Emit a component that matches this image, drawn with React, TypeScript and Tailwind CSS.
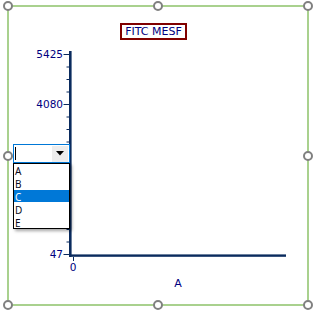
import React from "react";

const navy = "#000080";
const axis = "#0a2b5e";

/* selection handles around the chart frame (center x, center y) */
const handles: [number, number][] = [
  [8, 6],
  [158, 6],
  [308, 6],
  [8, 156],
  [308, 156],
  [8, 305],
  [158, 305],
  [308, 305],
];

const majorTicks = [
  { y: 54.5, label: "5425" },
  { y: 104.5, label: "4080" },
  { y: 154.5, label: "2736" },
  { y: 204.5, label: "1391" },
  { y: 254.5, label: "47" },
];

const minorTicks = Array.from({ length: 17 }, (_, i) => 54.5 + i * 12.5).filter(
  (y) => !majorTicks.some((t) => t.y === y)
);

const items = ["A", "B", "C", "D", "E"];

const Chart = () => (
  <svg
    width={298}
    height={264}
    viewBox="9 40 298 264"
    className="block"
    style={{ fontFamily: '"DejaVu Sans", Verdana, sans-serif' }}
  >
    {/* y axis */}
    <rect x={69} y={51} width={2.6} height={206} fill={axis} />
    {/* x axis */}
    <rect x={69} y={254.4} width={217} height={2.4} fill={axis} />

    {minorTicks.map((y) => (
      <line key={y} x1={66.5} x2={69} y1={y} y2={y} stroke={axis} strokeWidth={1} />
    ))}
    {majorTicks.map((t) => (
      <g key={t.y}>
        <line x1={63.5} x2={69} y1={t.y} y2={t.y} stroke={axis} strokeWidth={1} />
        <text x={63} y={t.y + 3.6} textAnchor="end" fontSize={10.5} fill={navy}>
          {t.label}
        </text>
      </g>
    ))}

    {/* x tick */}
    <line x1={73.5} x2={73.5} y1={257} y2={261} stroke={axis} strokeWidth={1} />
    <text x={73} y={271} textAnchor="middle" fontSize={10.5} fill={navy}>
      0
    </text>
    <text x={178} y={287} textAnchor="middle" fontSize={11} fill={navy}>
      A
    </text>
  </svg>
);

const Dropdown = () => (
  <div className="absolute left-[13px] top-[144px] w-[57px]">
    <div className="h-[19px] border border-[#0078d7] bg-white flex items-center">
      <div className="ml-[1px] w-px h-[13px] bg-black" />
      <div className="ml-auto mr-[1px] w-[16px] h-[16px] bg-[#ededed] flex items-center justify-center">
        <svg width="8" height="5" viewBox="0 0 8 5">
          <path d="M0 0 H8 L4 4.5 Z" fill="#000" />
        </svg>
      </div>
    </div>
    <div
      className="border border-black bg-white shadow-[2px_2px_3px_rgba(0,0,0,0.35)]"
      style={{ fontFamily: '"Segoe UI", "Noto Sans", sans-serif' }}
    >
      {items.map((it) => (
        <div
          key={it}
          className={
            it === "C"
              ? "h-[12.8px] pl-[1px] pt-[2px] flex items-center text-[10px] leading-none bg-[#0078d7] text-white"
              : "h-[12.8px] pl-[1px] pt-[2px] flex items-center text-[10px] leading-none text-[#0a0a20]"
          }
        >
          {it}
        </div>
      ))}
    </div>
  </div>
);

export default function App() {
  return (
    <div className="relative w-[315px] h-[313px] bg-white overflow-hidden pl-[7px] pt-[5px]">
      <div className="w-[302px] h-[301px] border-2 border-[#a9d18e] flex flex-col">
        <div
          className="ml-[111px] mt-[16px] w-[67px] h-[17px] border-2 border-[#800000] flex items-center justify-center text-[11px] leading-none text-[#000080]"
          style={{ fontFamily: '"DejaVu Sans", Verdana, sans-serif' }}
        >
          FITC MESF
        </div>
        <Chart />
      </div>

      {handles.map(([cx, cy]) => (
        <div
          key={`${cx}-${cy}`}
          className="absolute w-[10px] h-[10px] rounded-full border-2 border-[#808080] bg-white"
          style={{ left: cx - 5, top: cy - 5 }}
        />
      ))}

      <Dropdown />
    </div>
  );
}
